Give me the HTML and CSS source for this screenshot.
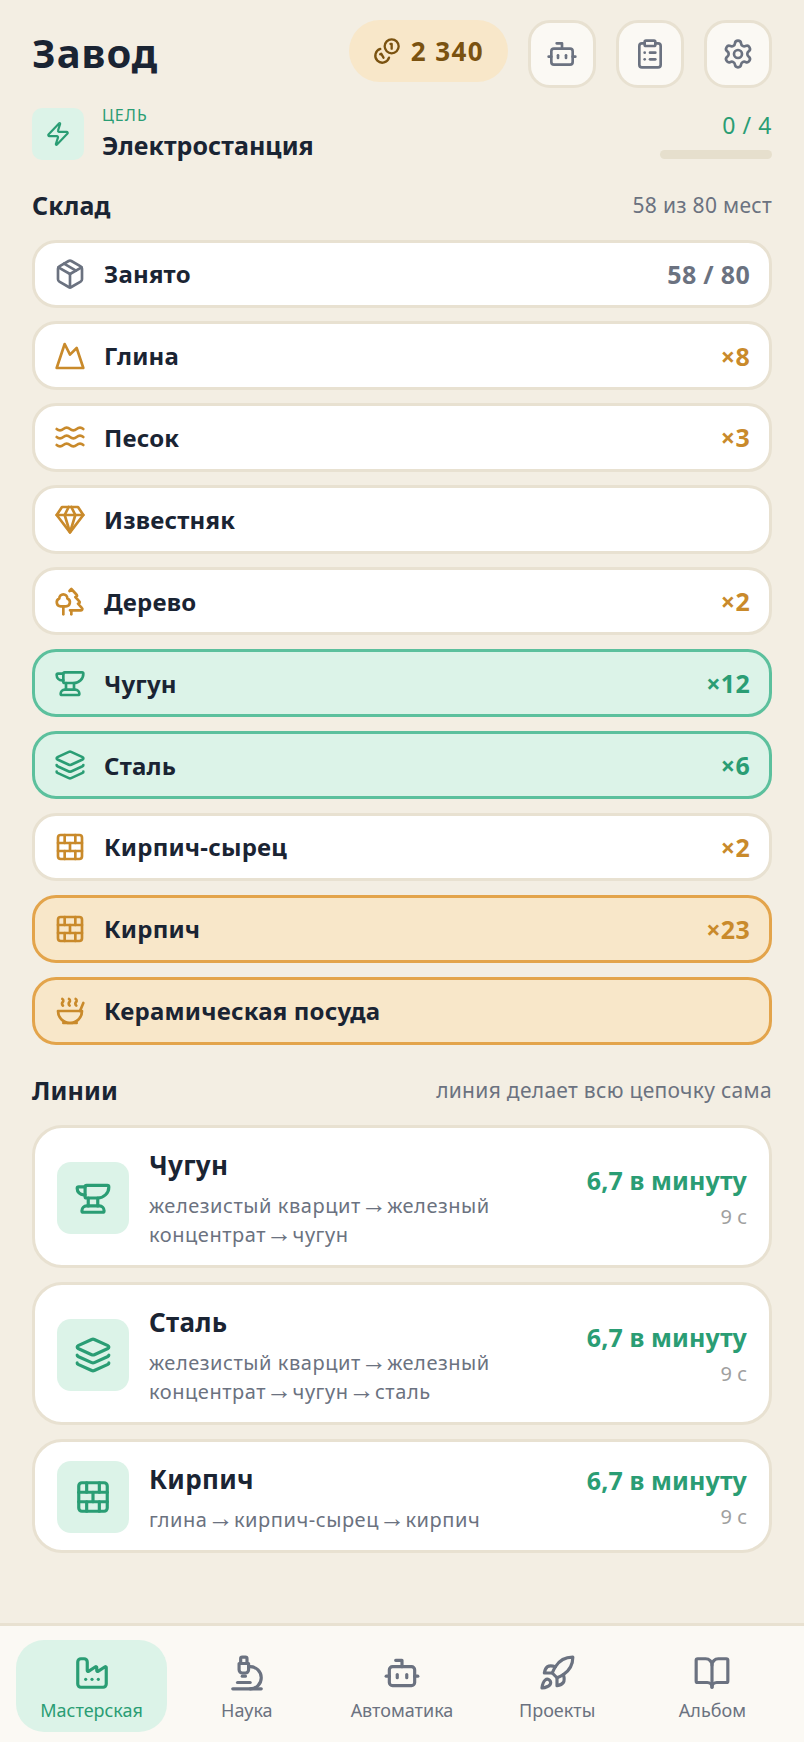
FILE: index.html
```html
<!DOCTYPE html>
<html lang="ru">
<head>
<meta charset="utf-8">
<title>Завод</title>
<link rel="stylesheet" href="styles.css">
</head>
<body>
<svg class="sprite" aria-hidden="true">
  <symbol id="i-bot" viewBox="0 0 24 24"><path d="M12 8V4H8"/><rect x="4" y="8" width="16" height="12" rx="2"/><path d="M2 14h2"/><path d="M20 14h2"/><path d="M15 13v2"/><path d="M9 13v2"/></symbol>
  <symbol id="i-clip" viewBox="0 0 24 24"><rect x="8" y="2" width="8" height="4" rx="1"/><path d="M16 4h2a2 2 0 0 1 2 2v14a2 2 0 0 1-2 2H6a2 2 0 0 1-2-2V6a2 2 0 0 1 2-2h2"/><path d="M12 11h4"/><path d="M12 16h4"/><path d="M8 11h.01"/><path d="M8 16h.01"/></symbol>
  <symbol id="i-gear" viewBox="0 0 24 24"><path d="M9.671 4.136a2.34 2.34 0 0 1 4.659 0 2.34 2.34 0 0 0 3.319 1.915 2.34 2.34 0 0 1 2.33 4.033 2.34 2.34 0 0 0 0 3.831 2.34 2.34 0 0 1-2.33 4.033 2.34 2.34 0 0 0-3.319 1.915 2.34 2.34 0 0 1-4.659 0 2.34 2.34 0 0 0-3.32-1.915 2.34 2.34 0 0 1-2.33-4.033 2.34 2.34 0 0 0 0-3.831A2.34 2.34 0 0 1 6.35 6.051a2.34 2.34 0 0 0 3.319-1.915"/><circle cx="12" cy="12" r="3"/></symbol>
  <symbol id="i-coins" viewBox="0 0 24 24"><path d="M13.744 17.736a6 6 0 1 1-7.48-7.48"/><path d="M15 6h1v4"/><path d="m6.134 14.768.866-.5 2 3.464"/><circle cx="16" cy="8" r="6"/></symbol>
  <symbol id="i-zap" viewBox="0 0 24 24"><path d="M4 14a1 1 0 0 1-.78-1.63l9.9-10.2a.5.5 0 0 1 .86.46l-1.92 6.02A1 1 0 0 0 13 10h7a1 1 0 0 1 .78 1.63l-9.9 10.2a.5.5 0 0 1-.86-.46l1.92-6.02A1 1 0 0 0 11 14z"/></symbol>
  <symbol id="i-package" viewBox="0 0 24 24"><path d="M11 21.73a2 2 0 0 0 2 0l7-4A2 2 0 0 0 21 16V8a2 2 0 0 0-1-1.73l-7-4a2 2 0 0 0-2 0l-7 4A2 2 0 0 0 3 8v8a2 2 0 0 0 1 1.73z"/><path d="M12 22V12"/><path d="M3.29 7 12 12 20.71 7"/><path d="m7.5 4.27 9 5.15"/></symbol>
  <symbol id="i-mountain" viewBox="0 0 24 24"><path d="m8 3 4 8 5-5 5 15H2L8 3z"/></symbol>
  <symbol id="i-waves" viewBox="0 0 24 24"><path d="M2 6c.6.5 1.2 1 2.5 1C7 7 7 5 9.5 5c2.6 0 2.4 2 5 2 2.5 0 2.5-2 5-2 1.3 0 1.9.5 2.5 1"/><path d="M2 12c.6.5 1.2 1 2.5 1 2.5 0 2.5-2 5-2 2.6 0 2.4 2 5 2 2.5 0 2.5-2 5-2 1.3 0 1.9.5 2.5 1"/><path d="M2 18c.6.5 1.2 1 2.5 1 2.5 0 2.5-2 5-2 2.6 0 2.4 2 5 2 2.5 0 2.5-2 5-2 1.3 0 1.9.5 2.5 1"/></symbol>
  <symbol id="i-gem" viewBox="0 0 24 24"><path d="M6 3h12l4 6-10 13L2 9Z"/><path d="M11 3 8 9l4 13 4-13-3-6"/><path d="M2 9h20"/></symbol>
  <symbol id="i-trees" viewBox="0 0 24 24"><path d="M10 10v.2A3 3 0 0 1 8.9 16H5a3 3 0 0 1-1-5.8V10a3 3 0 0 1 6 0Z"/><path d="M7 16v6"/><path d="M13 19v3"/><path d="M12 19h8.3a1 1 0 0 0 .7-1.7L18 14h.3a1 1 0 0 0 .7-1.7L16 9h.2a1 1 0 0 0 .8-1.7L13 3l-1.4 1.5"/></symbol>
  <symbol id="i-anvil" viewBox="0 0 24 24"><path d="M7 10H6a4 4 0 0 1-4-4 1 1 0 0 1 1-1h4"/><path d="M7 5a1 1 0 0 1 1-1h13a1 1 0 0 1 1 1 7 7 0 0 1-7 7H8a1 1 0 0 1-1-1z"/><path d="M9 12v5"/><path d="M15 12v5"/><path d="M5 20a3 3 0 0 1 3-3h8a3 3 0 0 1 3 3 1 1 0 0 1-1 1H6a1 1 0 0 1-1-1"/></symbol>
  <symbol id="i-layers" viewBox="0 0 24 24"><path d="M12.83 2.18a2 2 0 0 0-1.66 0L2.6 6.08a1 1 0 0 0 0 1.83l8.58 3.91a2 2 0 0 0 1.66 0l8.58-3.9a1 1 0 0 0 0-1.83z"/><path d="M2 12a1 1 0 0 0 .58.91l8.6 3.91a2 2 0 0 0 1.65 0l8.58-3.9A1 1 0 0 0 22 12"/><path d="M2 17a1 1 0 0 0 .58.91l8.6 3.91a2 2 0 0 0 1.65 0l8.58-3.9A1 1 0 0 0 22 17"/></symbol>
  <symbol id="i-brick" viewBox="0 0 24 24"><rect x="3" y="3" width="18" height="18" rx="2"/><path d="M12 9v6"/><path d="M16 15v6"/><path d="M16 3v6"/><path d="M3 15h18"/><path d="M3 9h18"/><path d="M8 15v6"/><path d="M8 3v6"/></symbol>
  <symbol id="i-soup" viewBox="0 0 24 24"><path d="M12 21a9 9 0 0 0 9-9H3a9 9 0 0 0 9 9Z"/><path d="M7 21h10"/><path d="M19.5 12 22 6"/><path d="M16.25 3c.27.1.8.53.75 1.36-.06.83-.93 1.2-1 2.02-.05.78.34 1.24.73 1.62"/><path d="M11.25 3c.27.1.8.53.74 1.36-.05.83-.93 1.2-.98 2.02-.06.78.33 1.24.72 1.62"/><path d="M6.25 3c.27.1.8.53.75 1.36-.06.83-.93 1.2-1 2.02-.05.78.34 1.24.74 1.62"/></symbol>
  <symbol id="i-factory" viewBox="0 0 24 24"><path d="M12 16h.01"/><path d="M16 16h.01"/><path d="M3 19a2 2 0 0 0 2 2h14a2 2 0 0 0 2-2V8.5a.5.5 0 0 0-.769-.422l-4.462 2.844A.5.5 0 0 1 15 10.5v-2a.5.5 0 0 0-.769-.422L9.77 10.922A.5.5 0 0 1 9 10.5V5a2 2 0 0 0-2-2H5a2 2 0 0 0-2 2z"/><path d="M8 16h.01"/></symbol>
  <symbol id="i-micro" viewBox="0 0 24 24"><path d="M6 18h8"/><path d="M3 22h18"/><path d="M14 22a7 7 0 1 0 0-14h-1"/><path d="M9 14h2"/><path d="M9 12a2 2 0 0 1-2-2V6h6v4a2 2 0 0 1-2 2Z"/><path d="M12 6V3a1 1 0 0 0-1-1H9a1 1 0 0 0-1 1v3"/></symbol>
  <symbol id="i-rocket" viewBox="0 0 24 24"><path d="M4.5 16.5c-1.5 1.26-2 5-2 5s3.74-.5 5-2c.71-.84.7-2.13-.09-2.91a2.18 2.18 0 0 0-2.91-.09z"/><path d="m12 15-3-3a22 22 0 0 1 2-3.95A12.88 12.88 0 0 1 22 2c0 2.72-.78 7.5-6 11a22.35 22.35 0 0 1-4 2z"/><path d="M9 12H4s.55-3.03 2-4c1.62-1.08 5 0 5 0"/><path d="M12 15v5s3.03-.55 4-2c1.08-1.62 0-5 0-5"/></symbol>
  <symbol id="i-book" viewBox="0 0 24 24"><path d="M12 7v14"/><path d="M3 18a1 1 0 0 1-1-1V4a1 1 0 0 1 1-1h5a4 4 0 0 1 4 4 4 4 0 0 1 4-4h5a1 1 0 0 1 1 1v13a1 1 0 0 1-1 1h-6a3 3 0 0 0-3 3 3 3 0 0 0-3-3z"/></symbol>
</svg>

<main class="main">
  <header class="top">
    <h1 class="title">Завод</h1>
    <div class="coins"><svg class="ico ico-coin"><use href="#i-coins"/></svg><span>2 340</span></div>
    <button class="sq"><svg class="ico ico-sq"><use href="#i-bot"/></svg></button>
    <button class="sq"><svg class="ico ico-sq"><use href="#i-clip"/></svg></button>
    <button class="sq"><svg class="ico ico-sq"><use href="#i-gear"/></svg></button>
  </header>

  <section class="goal">
    <div class="goal-tile"><svg class="ico ico-zap"><use href="#i-zap"/></svg></div>
    <div class="goal-text">
      <div class="goal-label">ЦЕЛЬ</div>
      <div class="goal-name">Электростанция</div>
    </div>
    <div class="goal-side">
      <div class="goal-count">0 / 4</div>
      <div class="goal-bar"></div>
    </div>
  </section>

  <div class="sec-head"><h2 class="sec-title">Склад</h2><span class="sec-note">58 из 80 мест</span></div>
  <div class="rows">
    <div class="row"><svg class="ico ico-row c-gray"><use href="#i-package"/></svg><span class="row-name">Занято</span><span class="row-val c-gray">58 / 80</span></div>
    <div class="row"><svg class="ico ico-row c-amber"><use href="#i-mountain"/></svg><span class="row-name">Глина</span><span class="row-val c-amber">×8</span></div>
    <div class="row"><svg class="ico ico-row c-amber"><use href="#i-waves"/></svg><span class="row-name">Песок</span><span class="row-val c-amber">×3</span></div>
    <div class="row"><svg class="ico ico-row c-amber"><use href="#i-gem"/></svg><span class="row-name">Известняк</span></div>
    <div class="row"><svg class="ico ico-row c-amber"><use href="#i-trees"/></svg><span class="row-name">Дерево</span><span class="row-val c-amber">×2</span></div>
    <div class="row row-green"><svg class="ico ico-row c-green"><use href="#i-anvil"/></svg><span class="row-name">Чугун</span><span class="row-val c-green">×12</span></div>
    <div class="row row-green"><svg class="ico ico-row c-green"><use href="#i-layers"/></svg><span class="row-name">Сталь</span><span class="row-val c-green">×6</span></div>
    <div class="row"><svg class="ico ico-row c-amber"><use href="#i-brick"/></svg><span class="row-name">Кирпич-сырец</span><span class="row-val c-amber">×2</span></div>
    <div class="row row-amber"><svg class="ico ico-row c-amber"><use href="#i-brick"/></svg><span class="row-name">Кирпич</span><span class="row-val c-amber">×23</span></div>
    <div class="row row-amber"><svg class="ico ico-row c-amber"><use href="#i-soup"/></svg><span class="row-name">Керамическая посуда</span></div>
  </div>

  <div class="sec-head sec-head-lines"><h2 class="sec-title">Линии</h2><span class="sec-note">линия делает всю цепочку сама</span></div>
  <div class="lines">
    <div class="line">
      <div class="line-tile"><svg class="ico ico-line"><use href="#i-anvil"/></svg></div>
      <div class="line-body"><div class="line-name">Чугун</div><div class="line-sub">железистый кварцит<span class="arr"> → </span>железный</div><div class="line-sub">концентрат<span class="arr"> → </span>чугун</div></div>
      <div class="line-side"><div class="line-rate">6,7 в минуту</div><div class="line-time">9 с</div></div>
    </div>
    <div class="line">
      <div class="line-tile"><svg class="ico ico-line"><use href="#i-layers"/></svg></div>
      <div class="line-body"><div class="line-name">Сталь</div><div class="line-sub">железистый кварцит<span class="arr"> → </span>железный</div><div class="line-sub">концентрат<span class="arr"> → </span>чугун<span class="arr"> → </span>сталь</div></div>
      <div class="line-side"><div class="line-rate">6,7 в минуту</div><div class="line-time">9 с</div></div>
    </div>
    <div class="line">
      <div class="line-tile"><svg class="ico ico-line"><use href="#i-brick"/></svg></div>
      <div class="line-body"><div class="line-name">Кирпич</div><div class="line-sub">глина<span class="arr"> → </span>кирпич-сырец<span class="arr"> → </span>кирпич</div></div>
      <div class="line-side"><div class="line-rate">6,7 в минуту</div><div class="line-time">9 с</div></div>
    </div>
  </div>
</main>

<nav class="nav">
  <a class="tab tab-on"><svg class="ico ico-nav"><use href="#i-factory"/></svg><span>Мастерская</span></a>
  <a class="tab"><svg class="ico ico-nav"><use href="#i-micro"/></svg><span>Наука</span></a>
  <a class="tab"><svg class="ico ico-nav"><use href="#i-bot"/></svg><span>Автоматика</span></a>
  <a class="tab"><svg class="ico ico-nav"><use href="#i-rocket"/></svg><span>Проекты</span></a>
  <a class="tab"><svg class="ico ico-nav"><use href="#i-book"/></svg><span>Альбом</span></a>
</nav>
</body>
</html>
```

FILE: styles.css
```css
* { box-sizing: border-box; }
html, body { margin: 0; padding: 0; }
body {
  height: 100vh;
  display: flex;
  flex-direction: column;
  background: #f3eee3;
  color: #1a2433;
  font-family: "Noto Sans", "Open Sans", sans-serif;
  overflow: hidden;
}
.sprite { display: none; }
.ico {
  fill: none;
  stroke: currentColor;
  stroke-width: 2;
  stroke-linecap: round;
  stroke-linejoin: round;
  flex: none;
  display: block;
}
.c-gray { color: #6b7280; }
.c-amber { color: #c98a2b; }
.c-green { color: #2a9d74; }

.main { flex: 1; padding: 20px 32px 0; min-height: 0; }

.top { display: flex; align-items: flex-start; gap: 20px; height: 68px; }
.title { margin: 0 auto 0 0; font-size: 40px; line-height: 66px; font-weight: 700; letter-spacing: 1px; }
.coins {
  display: flex; align-items: center; gap: 10px;
  height: 62px; padding: 0 24px; border-radius: 31px;
  background: #f8e7c9; color: #7a5210;
  font-size: 26px; font-weight: 700; letter-spacing: 1.4px;
}
.ico-coin { width: 28px; height: 28px; }
.sq {
  width: 68px; height: 68px; padding: 0;
  display: flex; align-items: center; justify-content: center;
  background: #fbf9f4; border: 3px solid #e8e1d1; border-radius: 22px;
  color: #6b7280;
}
.ico-sq { width: 32px; height: 32px; }

.goal { display: flex; align-items: center; gap: 18px; margin-top: 20px; height: 52px; }
.goal-tile {
  width: 52px; height: 52px; border-radius: 10px; background: #dcf3e8; color: #2a9d74;
  display: flex; align-items: center; justify-content: center;
}
.ico-zap { width: 26px; height: 26px; }
.goal-text { flex: 1; padding-bottom: 2px; }
.goal-label { font-size: 16px; line-height: 20px; color: #2a9d74; margin-bottom: 3px; letter-spacing: 1px; }
.goal-name { font-size: 25px; line-height: 34px; font-weight: 700; letter-spacing: .05px; }
.goal-side { width: 112px; display: flex; flex-direction: column; align-items: flex-end; gap: 10px; }
.goal-count { font-size: 23px; line-height: 30px; color: #2a9d74; letter-spacing: .6px; }
.goal-bar { width: 100%; height: 9px; border-radius: 5px; background: #e6dfcd; }

.sec-head { display: flex; align-items: center; justify-content: space-between; height: 36px; padding-bottom: 2px; margin: 28px 0 15.5px; }
.sec-head-lines { margin-bottom: 16px; }
.sec-title { margin: 0; font-size: 25px; font-weight: 700; letter-spacing: .15px; }
.sec-note { font-size: 21px; color: #6b7280; letter-spacing: .3px; }

.rows { display: flex; flex-direction: column; gap: 13.5px; }
.row {
  display: flex; align-items: center; gap: 18px;
  height: 68.4px; padding: 0 19px;
  background: #fff; border: 3px solid #e8e1d1; border-radius: 24px;
}
.row-green { background: #dcf3e8; border-color: #5cc09d; }
.row-amber { background: #f8e7c9; border-color: #e3a44b; }
.ico-row { width: 32px; height: 32px; }
.row-name { flex: 1; font-size: 24px; font-weight: 700; letter-spacing: .2px; }
.row-val { font-size: 25px; font-weight: 700; letter-spacing: .3px; }

.lines { display: flex; flex-direction: column; gap: 14px; }
.line {
  display: flex; align-items: center; gap: 20px;
  padding: 19px 22px 16px;
  background: #fff; border: 3px solid #e8e1d1; border-radius: 30px;
}
.line-tile {
  width: 72px; height: 72px; flex: none; border-radius: 14px; background: #dcf3e8; color: #2a9d74;
  display: flex; align-items: center; justify-content: center;
}
.ico-line { width: 38px; height: 38px; }
.line-body { flex: 1; min-width: 0; }
.line-name { font-size: 26px; line-height: 36px; font-weight: 700; margin-bottom: 8px; letter-spacing: .3px; }
.line-sub { font-size: 20px; line-height: 29px; color: #6b7280; letter-spacing: .55px; white-space: nowrap; }
.arr { font-family: "Liberation Sans", sans-serif; font-size: 26px; line-height: 0; word-spacing: -7px; letter-spacing: 0; }
.line-side { flex: none; text-align: right; }
.line-rate { font-size: 25px; line-height: 34px; font-weight: 700; color: #2a9d74; letter-spacing: .1px; }
.line-time { font-size: 20px; line-height: 30px; color: #a0a0a0; margin-top: 5px; }

.nav {
  display: flex; gap: 4px;
  height: 119px; padding: 14px 16px 10px;
  background: #fbf9f4; border-top: 3px solid #e8e1d1;
}
.tab {
  flex: 1; display: flex; flex-direction: column; align-items: center; gap: 6px;
  padding-top: 14px; border-radius: 28px; color: #6b7280; font-size: 18px;
}
.tab-on { background: #dcf3e8; color: #2a9d74; }
.ico-nav { width: 38px; height: 38px; }
```
